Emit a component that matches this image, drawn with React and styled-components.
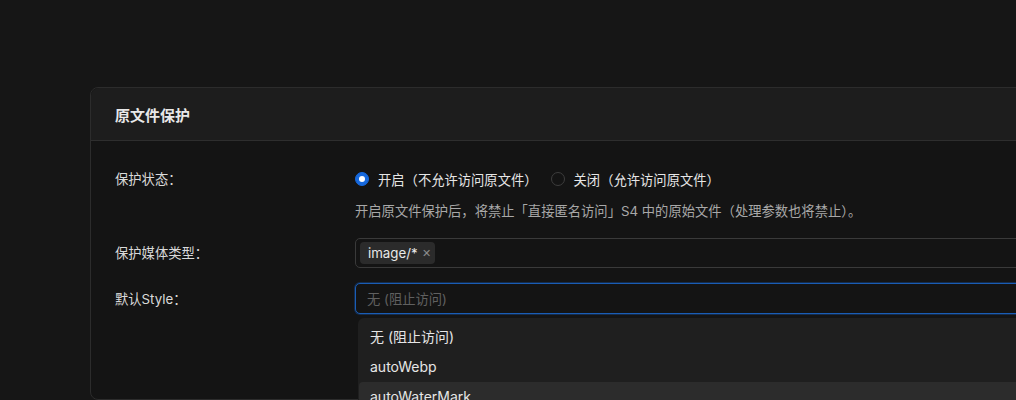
import React from "react";
import styled, { createGlobalStyle } from "styled-components";

const Global = createGlobalStyle`
  html, body { margin: 0; padding: 0; background: #161616; overflow: hidden; }
  body { font-family: "Inter", "Noto Sans CJK SC", sans-serif; -webkit-font-smoothing: antialiased; }
`;

const Page = styled.div`
  width: 1016px;
  height: 400px;
  box-sizing: border-box;
  padding: 87px 0 0 90px;
  overflow: hidden;
`;

const Card = styled.section`
  width: 980px;
  height: 313px;
  box-sizing: border-box;
  border: 1px solid #2c2c2c;
  border-radius: 8px;
  background: #141414;
  display: flex;
  flex-direction: column;
`;

const CardHeader = styled.header`
  height: 53px;
  flex: none;
  box-sizing: border-box;
  display: flex;
  align-items: center;
  padding: 0 24px;
  background: #1d1d1d;
  border-bottom: 1px solid #2e2e2e;
  border-radius: 8px 8px 0 0;
  color: #e8e8e8;
  font-size: 15px;
  font-weight: 600;
`;

const CardBody = styled.div`
  padding: 22px 24px 0 24px;
  display: flex;
  flex-direction: column;
`;

const FormRow = styled.div`
  display: grid;
  grid-template-columns: 240px 1fr;
  margin-bottom: ${(p) => p.$mb || 0}px;
`;

const Label = styled.div`
  height: ${(p) => p.$h || 32}px;
  display: flex;
  align-items: center;
  padding-bottom: 1px;
  box-sizing: border-box;
  color: #dadada;
  font-size: 13.3px;
`;

const Control = styled.div`
  display: flex;
  flex-direction: column;
  position: relative;
`;

const RadioGroup = styled.div`
  height: 32px;
  display: flex;
  align-items: center;
  gap: 13px;
`;

const RadioItem = styled.label`
  display: flex;
  align-items: center;
  gap: 9px;
  color: #e6e6e6;
  font-size: 13.3px;
`;

const RadioDot = styled.span`
  width: 14px;
  height: 14px;
  box-sizing: border-box;
  border-radius: 50%;
  display: flex;
  align-items: center;
  justify-content: center;
  background: ${(p) => (p.$checked ? "#1668dc" : "transparent")};
  border: 1px solid ${(p) => (p.$checked ? "#1668dc" : "#3d3d3d")};
  &::after {
    content: "";
    width: 6px;
    height: 6px;
    border-radius: 50%;
    background: #fff;
    display: ${(p) => (p.$checked ? "block" : "none")};
  }
`;

const Help = styled.div`
  margin-top: 6px;
  line-height: 20px;
  color: #a8a8a8;
  font-size: 13.3px;
`;

const TagBox = styled.div`
  height: 30px;
  box-sizing: border-box;
  border: 1px solid #3a3a3a;
  border-radius: 5px;
  display: flex;
  align-items: center;
  padding: 0 4px;
  background: #141414;
`;

const Tag = styled.span`
  height: 22px;
  display: inline-flex;
  align-items: center;
  gap: 4px;
  padding: 0 4px 0 8px;
  border-radius: 4px;
  background: #2b2b2b;
  color: #e8e8e8;
  font-size: 13.3px;
`;

const TagClose = styled.span`
  color: #8c8c8c;
  font-size: 11px;
  line-height: 1;
`;

const SelectBox = styled.div`
  height: 31px;
  box-sizing: border-box;
  border: 1px solid #1a5db5;
  box-shadow: 0 0 0 1px rgba(22, 90, 180, 0.35);
  border-radius: 5px;
  display: flex;
  align-items: center;
  padding: 0 11px;
  background: #141414;
  color: #606060;
  font-size: 13.3px;
`;

const Dropdown = styled.ul`
  position: absolute;
  top: 35px;
  left: 3px;
  width: 700px;
  margin: 0;
  padding: 4px 0;
  list-style: none;
  background: #1f1f1f;
  border-radius: 6px;
  z-index: 2;
`;

const Option = styled.li`
  height: 30px;
  display: flex;
  align-items: center;
  padding: 0 11px 2px;
  box-sizing: border-box;
  margin: 0 1px;
  border-radius: 4px;
  color: #e6e6e6;
  font-size: 14px;
  background: ${(p) => (p.$active ? "#2c2c2c" : "transparent")};
`;

export default function App() {
  return (
    <>
      <Global />
      <Page>
        <Card>
          <CardHeader>原文件保护</CardHeader>
          <CardBody>
            <FormRow $mb={17}>
              <Label>保护状态：</Label>
              <Control>
                <RadioGroup>
                  <RadioItem>
                    <RadioDot $checked />
                    开启（不允许访问原文件）
                  </RadioItem>
                  <RadioItem>
                    <RadioDot />
                    关闭（允许访问原文件）
                  </RadioItem>
                </RadioGroup>
                <Help>开启原文件保护后，将禁止「直接匿名访问」S4 中的原始文件（处理参数也将禁止）。</Help>
              </Control>
            </FormRow>
            <FormRow $mb={15}>
              <Label $h={30}>保护媒体类型：</Label>
              <Control>
                <TagBox>
                  <Tag>
                    image/*
                    <TagClose>✕</TagClose>
                  </Tag>
                </TagBox>
              </Control>
            </FormRow>
            <FormRow>
              <Label $h={31}>默认Style：</Label>
              <Control>
                <SelectBox>无 (阻止访问)</SelectBox>
                <Dropdown>
                  <Option>无 (阻止访问)</Option>
                  <Option>autoWebp</Option>
                  <Option $active>autoWaterMark</Option>
                </Dropdown>
              </Control>
            </FormRow>
          </CardBody>
        </Card>
      </Page>
    </>
  );
}
